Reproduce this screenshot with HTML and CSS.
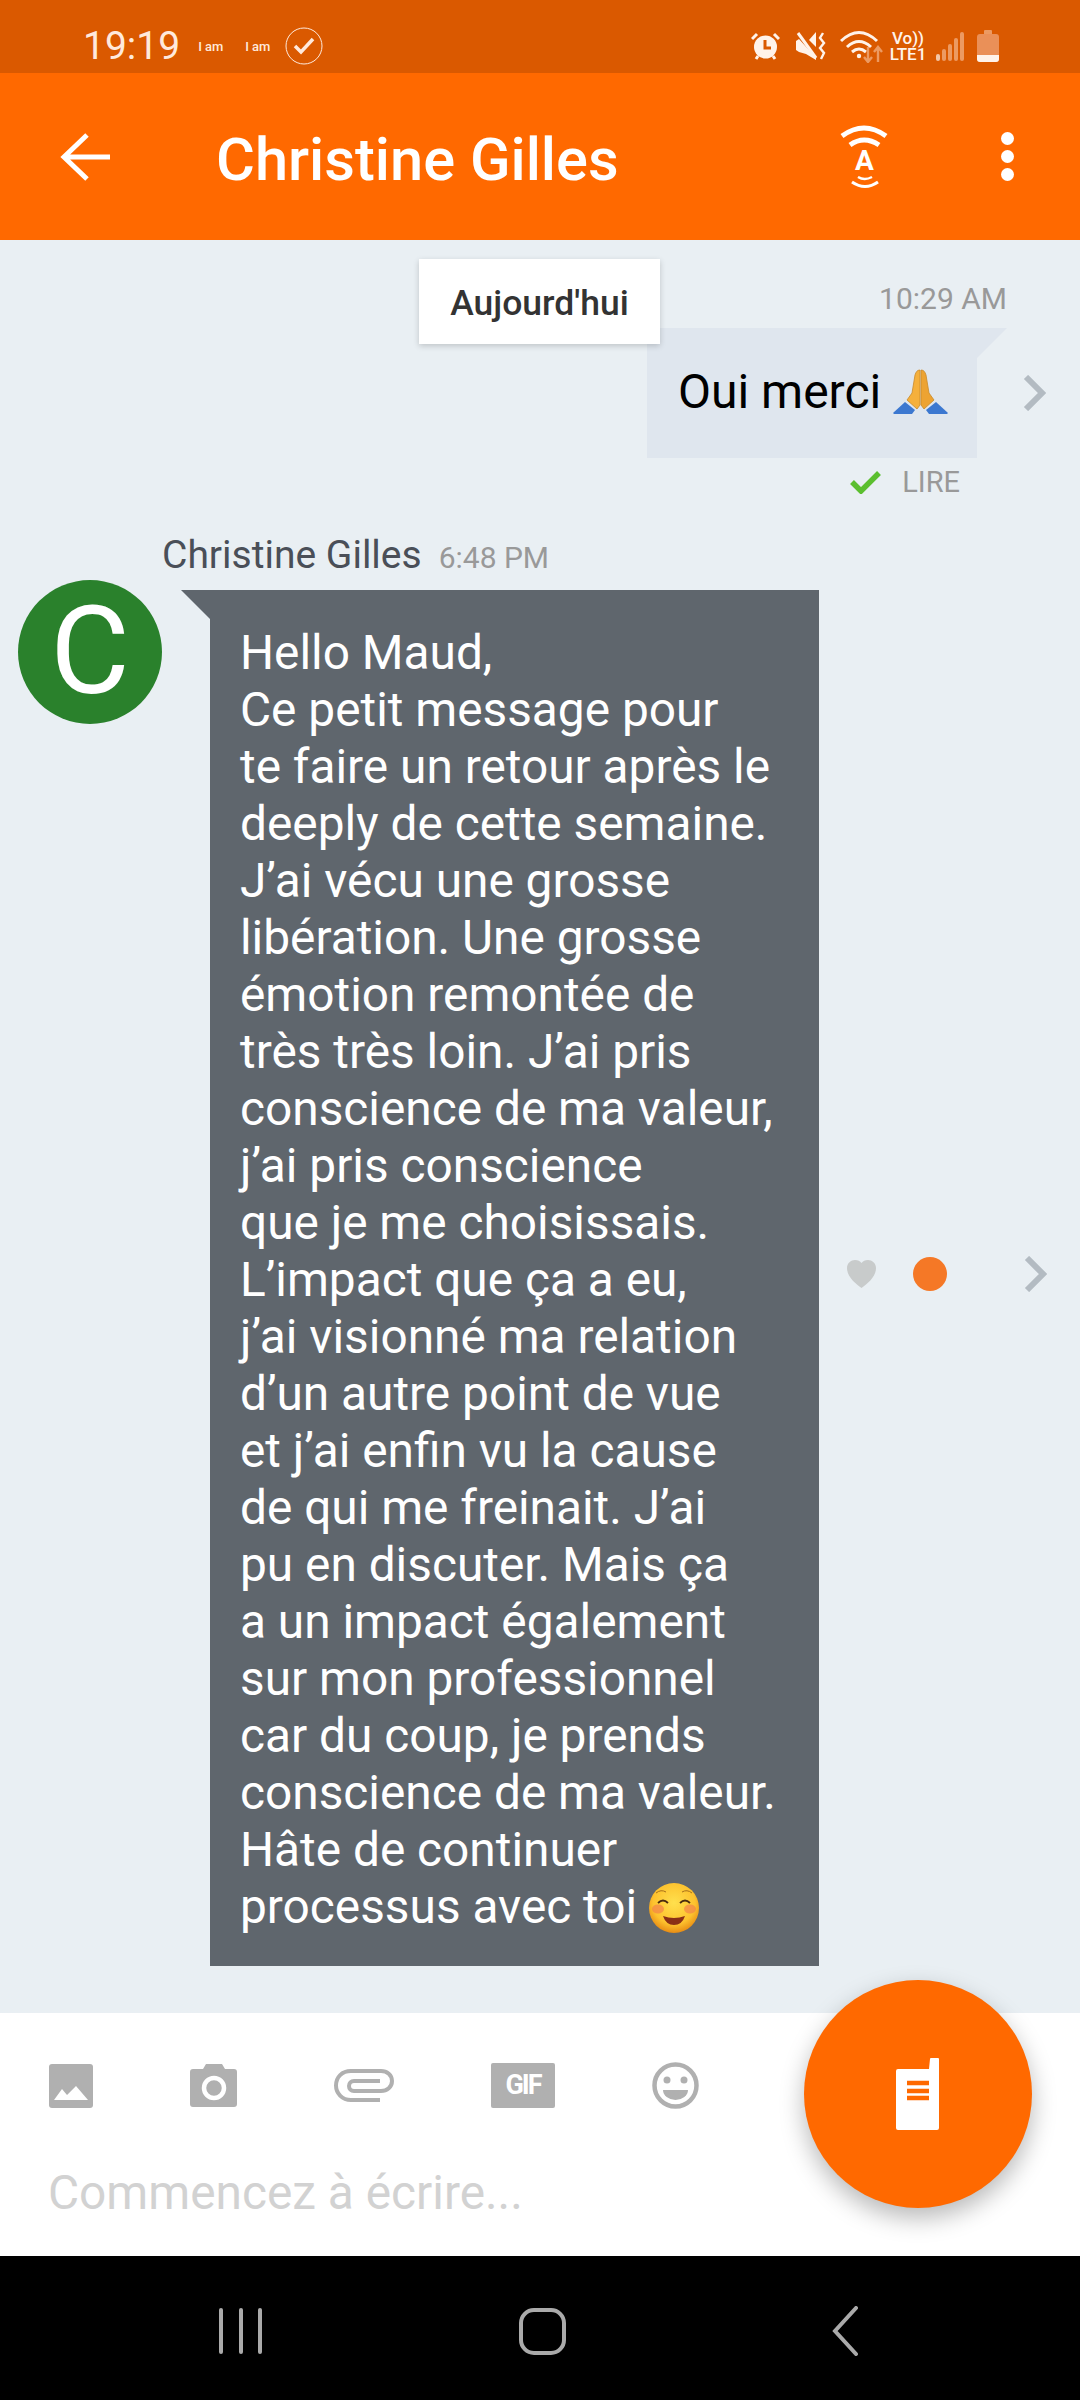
FILE: index.html
```html
<!DOCTYPE html>
<html lang="fr">
<head>
    <meta charset="UTF-8">
    <title>Christine Gilles</title>
    <link rel="stylesheet" href="styles.css">
</head>
<body>
    <div class="status-bar">
        <span class="status-time">19:19</span>
        <span class="status-note">I am</span>
        <span class="status-note">I am</span>
        <svg class="status-check" width="38" height="38" viewBox="0 0 38 38">
            <circle cx="19" cy="19" r="18" fill="none" stroke="#ffe9dc" stroke-width="1"/>
            <path d="M10 19 L16 25 L28 12" fill="none" stroke="#ffe9dc" stroke-width="3.5"/>
        </svg>
        <div class="status-icons">
            <svg width="29" height="28" viewBox="0 0 29 28">
                <circle cx="14.5" cy="15" r="11.5" fill="#fff3ea"/>
                <path d="M1 7 L6 2 M28 7 L23 2" stroke="#fff3ea" stroke-width="3"/>
                <path d="M5 27 L7 24 M24 27 L22 24" stroke="#fff3ea" stroke-width="3"/>
                <path d="M14 8 V16 H20" fill="none" stroke="#da5900" stroke-width="3"/>
            </svg>
            <svg width="31" height="28" viewBox="0 0 31 28">
                <path d="M14 8 L21 0 V15 Z" fill="#fff3ea"/>
                <path d="M1 9 L4 7 L21 26 V28 L11 22 L4 20 L1 18 Z" fill="#fff3ea"/>
                <path d="M3 1 L21 26" stroke="#fff3ea" stroke-width="3"/>
                <path d="M28 1 L25 6 L29 11 L25 16 L29 21 L26 27" fill="none" stroke="#fff3ea" stroke-width="2.4"/>
            </svg>
            <svg width="44" height="33" viewBox="0 0 44 33">
                <path d="M1 11 Q19 -6 37 11" fill="none" stroke="#fff3ea" stroke-width="3"/>
                <path d="M7 17 Q19 6 31 17" fill="none" stroke="#fff3ea" stroke-width="3"/>
                <path d="M12 22 Q19 16 26 22" fill="none" stroke="#fff3ea" stroke-width="3"/>
                <circle cx="19" cy="26" r="2.2" fill="#fff3ea"/>
                <path d="M28 17 V32 M24 27 L28 32 L32 27 M38 32 V18 M34 22 L38 17 L42 22" fill="none" stroke="#ec9a62" stroke-width="2.4"/>
            </svg>
            <div class="status-volte">
                <span>Vo))</span>
                <span>LTE1</span>
            </div>
            <svg width="28" height="29" viewBox="0 0 28 29">
                <rect x="0" y="22" width="4" height="7" rx="2" fill="#f3c6a6"/>
                <rect x="6" y="17" width="4" height="12" rx="2" fill="#ec9a62"/>
                <rect x="12" y="12" width="4" height="17" rx="2" fill="#ec9a62"/>
                <rect x="18" y="6" width="4" height="23" rx="2" fill="#ec9a62"/>
                <rect x="24" y="0" width="4" height="29" rx="2" fill="#ec9a62"/>
            </svg>
            <svg width="22" height="32" viewBox="0 0 22 32">
                <rect x="7" y="0" width="8" height="5" rx="1" fill="#ec9a62"/>
                <rect x="0" y="4" width="22" height="28" rx="3" fill="#ea9058"/>
                <path d="M0 25 H22 V29 A3 3 0 0 1 19 32 H3 A3 3 0 0 1 0 29 Z" fill="#fff3ea"/>
            </svg>
        </div>
    </div>

    <header class="app-header">
        <svg class="back-arrow" width="50" height="50" viewBox="0 0 50 50">
            <path d="M50 25 H4 M27 3 L4 25 L27 47" fill="none" stroke="#fff" stroke-width="5"/>
        </svg>
        <h1 class="chat-title">Christine Gilles</h1>
        <svg class="ptt-icon" width="48" height="66" viewBox="0 0 48 66">
            <path d="M2 12 Q24 -4 46 12" fill="none" stroke="#fff" stroke-width="5"/>
            <path d="M10 21 Q24 11 39 21" fill="none" stroke="#fff" stroke-width="5"/>
            <text x="24.5" y="46" text-anchor="middle" class="ptt-letter">A</text>
            <path d="M18 53 Q24.5 57 32 53" fill="none" stroke="#fff" stroke-width="2.5"/>
            <path d="M12 58 Q25 67 38 58" fill="none" stroke="#fff" stroke-width="3"/>
        </svg>
        <div class="more-menu">
            <span></span>
            <span></span>
            <span></span>
        </div>
    </header>

    <main class="conversation">
        <div class="date-chip">Aujourd'hui</div>

        <div class="sent-time">10:29 AM</div>
        <div class="sent-row">
            <div class="sent-bubble">
                Oui merci
                <svg class="emoji-pray" width="55" height="46" viewBox="0 0 55 46">
                    <path d="M0 44 L12 33 L22 41 L19 45 L1 45 Z" fill="#3c78d0"/>
                    <path d="M55 44 L43 33 L33 41 L36 45 L54 45 Z" fill="#3c78d0"/>
                    <path d="M27 1 C24 1 23 3 22 6 L19 24 L14 31 L24 40 L27 36 Z" fill="#f5b03c" stroke="#c98a2a" stroke-width="0.8"/>
                    <path d="M28 1 C31 1 32 3 33 6 L36 24 L41 31 L31 40 L28 36 Z" fill="#eda332" stroke="#c98a2a" stroke-width="0.8"/>
                </svg>
            </div>
            <svg class="chevron" width="23" height="36" viewBox="0 0 23 36">
                <path d="M3 2 L19 18 L3 34" fill="none" stroke="#b3bbc2" stroke-width="6"/>
            </svg>
        </div>
        <div class="read-row">
            <svg width="31" height="23" viewBox="0 0 31 23">
                <path d="M2 11 L11 20 L29 2" fill="none" stroke="#5bbf2f" stroke-width="5.5"/>
            </svg>
            <span class="read-label">LIRE</span>
        </div>

        <div class="sender-row">
            <span class="sender-name">Christine Gilles</span>
            <span class="sender-time">6:48 PM</span>
        </div>
        <div class="received-row">
            <div class="avatar">C</div>
            <div class="received-bubble">
                Hello Maud,<br>
                Ce petit message pour<br>
                te faire un retour après le<br>
                deeply de cette semaine.<br>
                J’ai vécu une grosse<br>
                libération. Une grosse<br>
                émotion remontée de<br>
                très très loin. J’ai pris<br>
                conscience de ma valeur,<br>
                j’ai pris conscience<br>
                que je me choisissais.<br>
                L’impact que ça a eu,<br>
                j’ai visionné ma relation<br>
                d’un autre point de vue<br>
                et j’ai enfin vu la cause<br>
                de qui me freinait. J’ai<br>
                pu en discuter. Mais ça<br>
                a un impact également<br>
                sur mon professionnel<br>
                car du coup, je prends<br>
                conscience de ma valeur.<br>
                Hâte de continuer<br>
                processus avec toi
                <svg class="emoji-smile" width="50" height="50" viewBox="0 0 50 50">
                    <defs>
                        <radialGradient id="smile-face" cx="50%" cy="40%" r="60%">
                            <stop offset="0%" stop-color="#ffe04d"/>
                            <stop offset="70%" stop-color="#fdc22e"/>
                            <stop offset="100%" stop-color="#e88c14"/>
                        </radialGradient>
                    </defs>
                    <circle cx="25" cy="25" r="25" fill="url(#smile-face)"/>
                    <ellipse cx="9" cy="26" rx="6" ry="4.5" fill="#f2834a" opacity="0.7"/>
                    <ellipse cx="41" cy="26" rx="6" ry="4.5" fill="#f2834a" opacity="0.7"/>
                    <path d="M9 20 Q14 15 19 20 M31 20 Q36 15 41 20" fill="none" stroke="#4a2c10" stroke-width="1.8"/>
                    <path d="M7 10 Q12 6 17 9 M33 9 Q38 6 43 10" fill="none" stroke="#a8701a" stroke-width="1"/>
                    <path d="M14 33 Q25 37 36 33 Q33 42 25 42 Q17 42 14 33 Z" fill="#8a2f16"/>
                </svg>
            </div>
            <div class="message-actions">
                <svg width="29" height="28" viewBox="0 0 29 28">
                    <path d="M14.5 28 C9 24 0 17 0 8 C0 3 4 0 8 0 C11 0 13 1 14.5 3 C16 1 18 0 21 0 C25 0 29 3 29 8 C29 17 20 24 14.5 28 Z" fill="#c8cbcb"/>
                </svg>
                <span class="unread-dot"></span>
                <svg class="chevron" width="23" height="36" viewBox="0 0 23 36">
                    <path d="M3 2 L19 18 L3 34" fill="none" stroke="#b3bbc2" stroke-width="6"/>
                </svg>
            </div>
        </div>
    </main>

    <footer class="composer">
        <div class="composer-tools">
            <svg width="44" height="44" viewBox="0 0 44 44">
                <rect width="44" height="44" rx="3" fill="#b0b0b0"/>
                <path d="M5 36 L13 25 L18 31 L27 22 L39 36 Z" fill="#fff"/>
            </svg>
            <svg width="47" height="43" viewBox="0 0 47 43">
                <path d="M3 5 H13 L16 0 H32 L35 5 H44 A3 3 0 0 1 47 8 V40 A3 3 0 0 1 44 43 H3 A3 3 0 0 1 0 40 V8 A3 3 0 0 1 3 5 Z" fill="#b0b0b0"/>
                <circle cx="24" cy="24" r="10" fill="none" stroke="#fff" stroke-width="4.5"/>
            </svg>
            <svg width="60" height="33" viewBox="0 0 60 33">
                <path d="M46 31 H17 C8 31 2 24 2 16.5 C2 8 8 2 17 2 H47 C53 2 58 6 58 12 C58 18 53 22 47 22 H20 C17 22 15 20 15 17 C15 14 17 12 20 12 H46" fill="none" stroke="#b0b0b0" stroke-width="4"/>
            </svg>
            <div class="gif-icon">GIF</div>
            <svg width="47" height="47" viewBox="0 0 47 47">
                <circle cx="23.5" cy="23.5" r="21" fill="none" stroke="#b0b0b0" stroke-width="4.5"/>
                <circle cx="15" cy="18" r="3.5" fill="#b0b0b0"/>
                <circle cx="32" cy="18" r="3.5" fill="#b0b0b0"/>
                <path d="M11 28 H36 A12.5 10 0 0 1 11 28 Z" fill="#b0b0b0"/>
            </svg>
        </div>
        <div class="composer-placeholder">Commencez à écrire...</div>
        <button class="talk-button">
            <svg width="43" height="72" viewBox="0 0 43 72">
                <path d="M34 1 A1 1 0 0 1 35 0 H42 A1 1 0 0 1 43 1 V70 A2 2 0 0 1 41 72 H2 A2 2 0 0 1 0 70 V13 A2 2 0 0 1 2 11 H33 Z" fill="#fff"/>
                <path d="M11 25 H33 M11 33 H33 M11 40 H33" stroke="#ff6900" stroke-width="4.4"/>
            </svg>
        </button>
    </footer>

    <nav class="nav-bar">
        <div class="nav-recents">
            <span></span>
            <span></span>
            <span></span>
        </div>
        <div class="nav-home"></div>
        <svg class="nav-back" width="27" height="50" viewBox="0 0 27 50">
            <path d="M24 2 L3 25 L24 48" fill="none" stroke="#aaa" stroke-width="4" stroke-linecap="round"/>
        </svg>
    </nav>
</body>
</html>
```

FILE: styles.css
```css
* {
    box-sizing: border-box;
}

body {
    margin: 0;
    width: 1080px;
    height: 2400px;
    display: flex;
    flex-direction: column;
    font-family: Roboto, "Noto Sans", sans-serif;
    background-color: #e9eff3;
    overflow: hidden;
}

/* Status bar */
.status-bar {
    height: 73px;
    background-color: #da5900;
    color: #ffe9dc;
    display: flex;
    align-items: center;
    padding-left: 83px;
    padding-right: 81px;
}

.status-time {
    font-size: 39px;
    margin-right: 18px;
    margin-top: 20px;
    line-height: 73px;
}

.status-note {
    font-size: 13px;
    font-weight: 500;
    width: 47px;
    margin-top: 20px;
}

.status-check {
    margin-left: -7px;
    margin-top: 19px;
}

.status-icons {
    margin-left: auto;
    display: flex;
    align-items: center;
    margin-top: 19px;
    color: #fff3ea;
}

.status-icons svg:nth-child(1) {
    margin-right: 15px;
}

.status-icons svg:nth-child(2) {
    margin-right: 14px;
}

.status-icons svg:nth-child(3) {
    margin-right: 5px;
}

.status-icons svg:nth-child(5) {
    margin-left: 9px;
    margin-right: 13px;
}

.status-volte {
    width: 38px;
    display: flex;
    flex-direction: column;
    align-items: center;
    font-size: 17px;
    font-weight: 500;
    line-height: 16px;
    white-space: nowrap;
}

/* Header */
.app-header {
    height: 167px;
    background-color: #ff6900;
    display: flex;
    align-items: center;
    padding-left: 60px;
    color: #fff;
}

.back-arrow {
    margin-right: 106px;
}

.chat-title {
    margin: 6px 0 0;
    font-size: 59.6px;
    font-weight: 500;
    line-height: 66px;
    width: 624px;
    white-space: nowrap;
}

.ptt-icon {
    margin-right: 113px;
    margin-top: 1px;
}

.ptt-letter {
    font-family: Roboto, sans-serif;
    font-size: 28px;
    font-weight: 700;
    fill: #fff;
}

.more-menu {
    display: flex;
    flex-direction: column;
    gap: 5px;
}

.more-menu span {
    width: 13px;
    height: 13px;
    border-radius: 50%;
    background-color: #fff;
}

/* Conversation */
.conversation {
    flex: 1;
    position: relative;
}

.date-chip {
    position: absolute;
    left: 419px;
    top: 19px;
    z-index: 1;
    width: 241px;
    height: 85px;
    padding-top: 3px;
    background-color: #fff;
    box-shadow: 0 2px 6px rgba(0, 0, 0, 0.18);
    color: #333;
    font-size: 35.5px;
    font-weight: 500;
    line-height: 82px;
    text-align: center;
}

.sent-time {
    padding-top: 40px;
    padding-right: 73px;
    margin-bottom: 10px;
    text-align: right;
    font-size: 30px;
    line-height: 38px;
    color: #999;
}

.sent-row {
    display: flex;
    justify-content: flex-end;
    align-items: center;
    padding-right: 34px;
    gap: 46px;
}

.sent-bubble {
    position: relative;
    width: 330px;
    height: 130px;
    padding-left: 31px;
    padding-top: 35px;
    background-color: #dfe6ee;
    color: #000;
    font-size: 48px;
    line-height: 57px;
    white-space: nowrap;
}

.sent-bubble::after {
    content: "";
    position: absolute;
    left: 100%;
    top: 0;
    width: 30px;
    height: 30px;
    background-color: #dfe6ee;
    clip-path: polygon(0 0, 100% 0, 0 100%);
}

.emoji-pray {
    vertical-align: -7px;
}

.read-row {
    display: flex;
    justify-content: flex-end;
    align-items: center;
    gap: 21px;
    padding-right: 120px;
    padding-bottom: 12px;
    height: 60px;
}

.read-label {
    font-size: 29px;
    line-height: 36px;
    color: #999;
}

.sender-row {
    display: flex;
    align-items: baseline;
    gap: 17px;
    padding-left: 162px;
    height: 62px;
    padding-top: 16px;
}

.sender-name {
    font-size: 39px;
    line-height: 42px;
    color: #4a4f58;
}

.sender-time {
    font-size: 30px;
    line-height: 42px;
    color: #999;
}

.received-row {
    display: flex;
    align-items: center;
    padding-left: 18px;
}

.avatar {
    width: 144px;
    height: 144px;
    flex-shrink: 0;
    align-self: flex-start;
    border-radius: 50%;
    background-color: #2a812c;
    color: #fff;
    font-size: 122px;
    line-height: 144px;
    text-align: center;
}

.received-bubble {
    position: relative;
    width: 609px;
    height: 1376px;
    margin-left: 48px;
    margin-top: 10px;
    padding: 35px 0 0 30px;
    background-color: #5f666d;
    color: #fff;
    font-size: 47.8px;
    line-height: 57px;
    white-space: nowrap;
}

.received-bubble::before {
    content: "";
    position: absolute;
    right: 100%;
    top: 0;
    width: 29px;
    height: 29px;
    background-color: #5f666d;
    clip-path: polygon(0 0, 100% 0, 100% 100%);
}

.emoji-smile {
    vertical-align: -10px;
}

.message-actions {
    display: flex;
    align-items: center;
    margin-left: 28px;
    margin-top: 2px;
}

.unread-dot {
    width: 34px;
    height: 34px;
    margin-left: 37px;
    margin-right: 77px;
    border-radius: 50%;
    background-color: #f57826;
}

/* Composer */
.composer {
    position: relative;
    height: 243px;
    background-color: #fff;
    padding-top: 49px;
}

.composer-tools {
    display: flex;
    align-items: center;
    gap: 97px;
    padding-left: 49px;
}

.gif-icon {
    width: 64px;
    height: 45px;
    border-radius: 2px;
    background-color: #b0b0b0;
    color: #fff;
    font-size: 27px;
    font-weight: 700;
    letter-spacing: -2px;
    line-height: 45px;
    text-align: center;
}

.composer-placeholder {
    padding-left: 48px;
    padding-top: 56px;
    font-size: 47.8px;
    line-height: 57px;
    color: #d2d2d2;
}

.talk-button {
    position: absolute;
    left: 804px;
    top: -33px;
    width: 228px;
    height: 228px;
    padding: 0 2px 0 0;
    border: none;
    border-radius: 50%;
    background-color: #ff6900;
    box-shadow: 0 10px 24px rgba(0, 0, 0, 0.28);
    display: flex;
    align-items: center;
    justify-content: center;
}

/* Navigation bar */
.nav-bar {
    height: 144px;
    background-color: #000;
    display: flex;
    align-items: center;
    padding-left: 219px;
    padding-top: 6px;
}

.nav-recents {
    display: flex;
    gap: 15.5px;
    margin-right: 257px;
}

.nav-recents span {
    width: 4px;
    height: 46px;
    border-radius: 2px;
    background-color: #aaa;
}

.nav-home {
    width: 47px;
    height: 47px;
    border: 4px solid #aaa;
    border-radius: 15px;
    margin-right: 266px;
}
```
